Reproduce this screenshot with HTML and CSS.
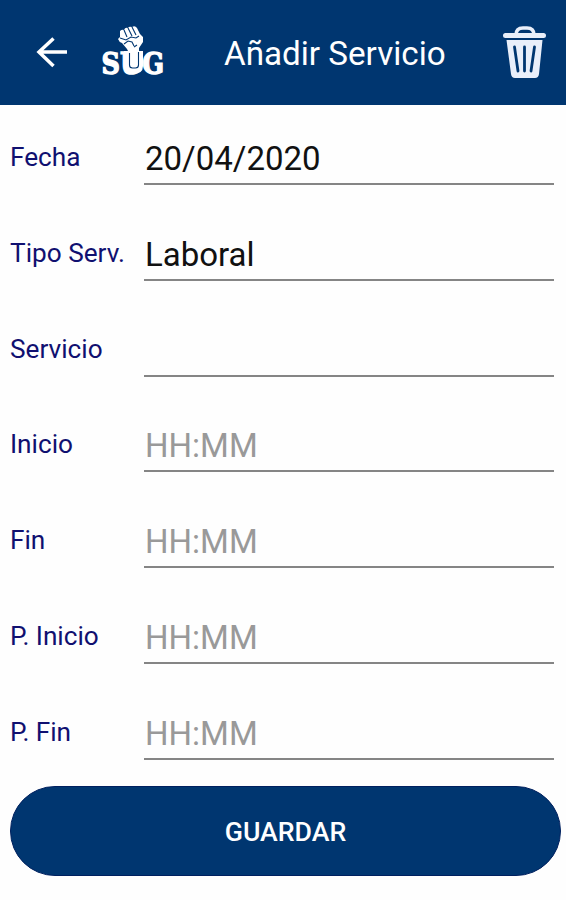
FILE: index.html
```html
<!DOCTYPE html>
<html lang="es">
<head>
<meta charset="utf-8">
<title>Añadir Servicio</title>
<link rel="stylesheet" href="styles.css">
</head>
<body>
<header class="bar">
  <svg class="back" viewBox="0 0 32 32" width="32" height="32"><path d="M17.500 2.500 3 16l14.500 14M3.500 16H31" fill="none" stroke="#fff" stroke-width="3.500"/></svg>
  <svg class="logo" viewBox="0 0 66 54" width="66" height="54">
    <text class="logo-text" x="1.500" y="48.500" textLength="62.500" lengthAdjust="spacingAndGlyphs">SUG</text>
    <path d="M20 6q2-2 4-1 1-3 4-2 1-2 4-1 3-2 5 1l3 6 3 3v5l-4 6v3h4v15q0 8-10 8-9 0-9-9V26h4l-1-2-5-6q-3-1-4-4l2-2Z" fill="#fff"/>
    <path d="m24 5 3 7m1-9 4 8m0-9 4 8M20 13l6 2 5-3 5 1 3-2M24 19l4-3 4 1 2 4M34 22l3-2M29.500 28v12q0 3 3 3h3q3 0 3-3V27" fill="none" stroke="#003670" stroke-width="1.100"/>
  </svg>
  <h1 class="title">Añadir Servicio</h1>
  <svg class="trash" viewBox="0 0 46 54" width="46" height="54">
    <path d="M14 9q0-7 7-7h4q7 0 7 7" fill="none" stroke="#e9effa" stroke-width="3.500"/>
    <path d="M3.500 7h38q2.500 0 2.500 2.500t-2.500 2.500h-38Q1 12 1 9.500t2.500-2.500ZM4.500 14h36L37 48q-.5 4-4 4H13q-3.500 0-4-4Z" fill="#e9effa"/>
    <path d="m12.500 21 3.500 24M22.500 21v24M32.500 21 29 45" fill="none" stroke="#003670" stroke-width="2.800" stroke-linecap="round"/>
  </svg>
</header>
<main>
  <div class="row"><label class="label">Fecha</label><div class="field">20/04/2020</div></div>
  <div class="row"><label class="label">Tipo Serv.</label><div class="field">Laboral</div></div>
  <div class="row"><label class="label">Servicio</label><div class="field"></div></div>
  <div class="row"><label class="label">Inicio</label><div class="field hint">HH:MM</div></div>
  <div class="row"><label class="label">Fin</label><div class="field hint">HH:MM</div></div>
  <div class="row"><label class="label">P. Inicio</label><div class="field hint">HH:MM</div></div>
  <div class="row"><label class="label">P. Fin</label><div class="field hint">HH:MM</div></div>
  <button class="save">GUARDAR</button>
</main>
</body>
</html>
```
FILE: styles.css
```css
* { box-sizing: border-box; }
body { margin: 0; background: #fefefe; font-family: Roboto, sans-serif; }
.bar { display: flex; align-items: flex-start; height: 105px; background: #003670; color: #fff; }
.back { margin: 36px 0 0 36px; }
.logo { margin: 25px 0 0 32px; overflow: visible; }
.logo-text { font: bold 30px "DejaVu Serif", serif; fill: #fff; stroke: #fff; stroke-width: 1.4px; }
.title { flex: none; width: 224px; margin: 34px 0 0 58px; font-size: 33.2px; line-height: 40px; font-weight: 400; white-space: nowrap; }
.trash { margin: 26px 0 0 54px; }
.row { display: flex; height: 95.8px; padding-left: 10px; }
.label { width: 134px; padding-top: 36px; font-size: 26.2px; line-height: 32px; color: #101070; white-space: nowrap; }
.field { width: 410px; height: 80px; padding: 33px 0 0 1px; border-bottom: 2px solid #858585; font-size: 33px; line-height: 42px; color: #111; }
.hint { color: #999; }
.save { display: block; width: 551px; height: 90px; margin: 10px 0 0 10px; padding: 2px 0 0; border: 1px solid #00205f; border-radius: 45px; background: #003670; color: #fff; font: 500 26.7px Roboto, sans-serif; }
```
